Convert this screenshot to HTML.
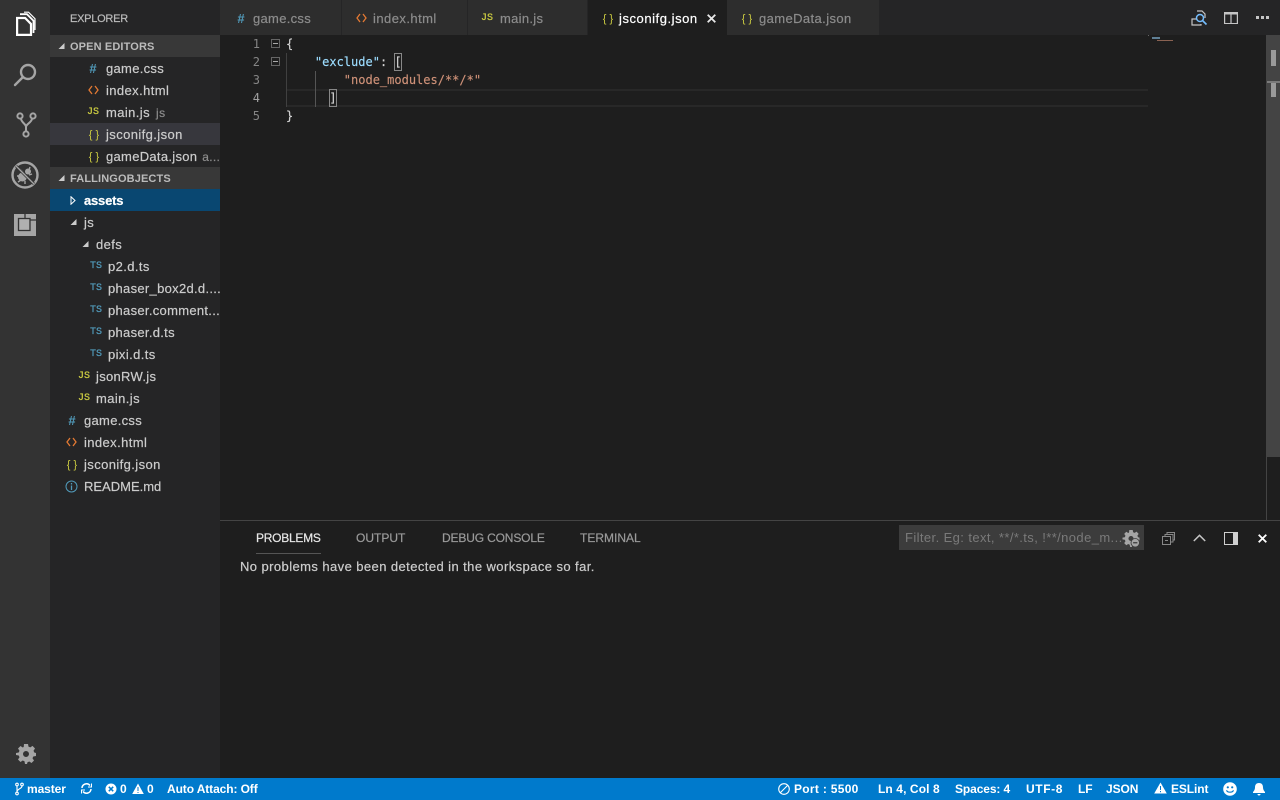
<!DOCTYPE html>
<html><head><meta charset="utf-8"><style>
html,body{margin:0;padding:0;width:1280px;height:800px;overflow:hidden;background:#1e1e1e}
body{font-family:"Liberation Sans",sans-serif;font-size:13px;color:#ccc;position:relative}
div,span.a,svg{position:absolute}
.t{white-space:nowrap;line-height:22px;height:22px;letter-spacing:.4px;margin-top:1px;-webkit-text-stroke:.2px}
.i{white-space:nowrap;line-height:22px;height:22px;text-align:center;margin-top:1px}
.hash{color:#519aba;font-size:13px;font-weight:bold}.js{color:#cbcb41;font-size:10px;font-family:"Liberation Mono",monospace;-webkit-text-stroke:.25px}.js2{color:#cbcb41;font-size:11px}.ts{color:#519aba;font-size:10px;font-family:"Liberation Mono",monospace;-webkit-text-stroke:.25px}
.m{font-family:"DejaVu Sans Mono",monospace;font-size:12px;line-height:18px;height:18px;white-space:pre;color:#d4d4d4;-webkit-text-stroke:.15px}
.n{color:#858585;width:20px;text-align:right;left:240px;-webkit-text-stroke:0}
.tab{top:0;height:35px;background:#2d2d2d;border-right:1px solid #252526;box-sizing:border-box}
.tt{top:7px;color:#8c8c8c;letter-spacing:.45px}
.h{font-size:11px;font-weight:bold;color:#bbb;line-height:22px;height:22px;white-space:nowrap;letter-spacing:.13px;margin-top:1px}
.p{top:527px;font-size:12px;line-height:22px;color:#9a9a9a;white-space:nowrap;-webkit-text-stroke:.2px}
.s{top:778px;height:22px;line-height:22px;color:#fff;font-size:12px;white-space:nowrap;font-weight:bold;letter-spacing:-.1px}
.c{fill:none;stroke:#e37933;stroke-width:1.300}
</style></head><body>

<div style="left:0;top:0;width:50px;height:778px;background:#333"></div>
<div style="left:50px;top:0;width:170px;height:778px;background:#252526"></div>

<svg style="left:14px;top:11px" width="24" height="26" viewBox="0 0 24 26" fill="none" stroke="#fff" stroke-width="2.200"><path d="M3.100 7h8l5.900 6v10.900H3.100z"/><path d="M6 3.200h7l6.500 6.500V22" stroke-width="1.800"/><path d="M10 1.200h4.500l6.500 6.500V19" stroke-width="1.200"/></svg>
<svg style="left:12px;top:62px" width="26" height="26" viewBox="0 0 26 26" fill="none" stroke="#a5a5a5" stroke-width="2.400"><circle cx="16" cy="10" r="7"/><path d="M11 15l-8 8" stroke-linecap="round"/></svg>
<svg style="left:14px;top:111px" width="24" height="28" viewBox="0 0 24 28" fill="none" stroke="#a5a5a5" stroke-width="2"><circle cx="6" cy="5" r="2.600"/><circle cx="19" cy="5" r="2.600"/><circle cx="12" cy="23" r="2.600"/><path d="M7 8c1 4 5 5 5 8v4M18 8c-1 4-6 5-6 8"/></svg>
<svg style="left:11px;top:161px" width="28" height="28" viewBox="0 0 28 28" fill="none" stroke="#a5a5a5"><circle cx="14" cy="14" r="12.500" stroke-width="2.400"/><ellipse cx="11.500" cy="16" rx="4.500" ry="4.500" fill="#a5a5a5" stroke="none"/><ellipse cx="17" cy="10.500" rx="3" ry="3" fill="#a5a5a5" stroke="none"/><path d="M9 8l3 3M21 13l-3 1M6 15h3M19 6l-1 3M7 21l3-2M14 23l0-3" stroke-width="1.400"/><path d="M5 5l18 18" stroke="#333" stroke-width="2.800"/><path d="M5 5l18 18" stroke-width="1.300"/></svg>
<svg style="left:14px;top:214px" width="22" height="22" viewBox="0 0 22 22"><rect width="22" height="22" fill="#a5a5a5"/><path d="M11 0v4M16 6h6M4.500 4.500h11.500v12H4.500z" fill="none" stroke="#333" stroke-width="1.300"/><rect x="5.500" y="5.500" width="9.500" height="10" fill="#b0b0b0"/></svg>
<svg style="left:16px;top:744px" width="20" height="20" viewBox="0 0 20 20"><path fill="#a5a5a5" fill-rule="evenodd" d="M8 0h4l.5 2.600 1.800.8L16.500 1.900 19 4.500l-1.500 2.200.8 1.800L20 9v3l-2.700.5-.8 1.800 1.500 2.200-2.500 2.500-2.200-1.500-1.800.8L11 20H9l-.5-2.700-1.800-.8-2.200 1.500L2 15.500l1.500-2.200-.8-1.800L0 11V9l2.700-.5.800-1.800L2 4.500 4.500 2l2.200 1.500 1-.5zM10 7a3 3 0 100 6 3 3 0 000-6z"/></svg>

<div class="t" style="left:70px;top:7px;font-size:11px;color:#bbb;letter-spacing:-.25px">EXPLORER</div>

<div style="left:50px;top:35px;width:170px;height:22px;background:#383838"></div>
<svg style="left:58px;top:42px" width="8" height="8"><path d="M6.500 1v6h-6z" fill="#ccc"/></svg>
<div class="h" style="left:70px;top:35px">OPEN EDITORS</div>

<div class="i hash" style="left:86px;top:57px;width:14px">#</div><div class="t" style="left:106px;top:57px;letter-spacing:.3px">game.css</div>
<svg style="left:88px;top:85px" width="11" height="10"><path class="c" d="M4 1L1 5l3 4M7 1l3 4-3 4"/></svg><div class="t" style="left:106px;top:79px">index.html</div>
<div class="i js" style="left:86px;top:101px;width:14px">JS</div><div class="t" style="left:106px;top:101px">main.js <span style="color:#8c8c8c;font-size:12px;margin-left:2px">js</span></div>
<div style="left:50px;top:123px;width:170px;height:22px;background:#37373d"></div>
<div class="i js2" style="left:86px;top:123px;width:16px">{ }</div><div class="t" style="left:106px;top:123px">jsconifg.json</div>
<div class="i js2" style="left:86px;top:145px;width:16px">{ }</div><div class="t" style="left:106px;top:145px;width:114px;overflow:hidden;letter-spacing:.3px">gameData.json <span style="color:#8c8c8c;font-size:12px;margin-left:1px">a...</span></div>

<div style="left:50px;top:167px;width:170px;height:22px;background:#383838"></div>
<svg style="left:58px;top:174px" width="8" height="8"><path d="M6.500 1v6h-6z" fill="#ccc"/></svg>
<div class="h" style="left:70px;top:167px">FALLINGOBJECTS</div>

<div style="left:50px;top:189px;width:170px;height:22px;background:#094771"></div>
<svg style="left:70px;top:196px" width="6" height="9"><path d="M1 .8l4 3.700-4 3.700z" fill="none" stroke="#fff"/></svg>
<div class="t" style="left:84px;top:189px;color:#fff;font-weight:bold;letter-spacing:-.2px">assets</div>

<svg style="left:70px;top:218px" width="8" height="8"><path d="M6.500 1v6h-6z" fill="#ccc"/></svg>
<div class="t" style="left:84px;top:211px">js</div>
<svg style="left:82px;top:240px" width="8" height="8"><path d="M6.500 1v6h-6z" fill="#ccc"/></svg>
<div class="t" style="left:96px;top:233px">defs</div>

<div class="i ts" style="left:89px;top:255px;width:14px">TS</div><div class="t" style="left:108px;top:255px">p2.d.ts</div>
<div class="i ts" style="left:89px;top:277px;width:14px">TS</div><div class="t" style="left:108px;top:277px;width:112px;overflow:hidden;letter-spacing:.3px">phaser_box2d.d....</div>
<div class="i ts" style="left:89px;top:299px;width:14px">TS</div><div class="t" style="left:108px;top:299px;width:113px;overflow:hidden;letter-spacing:.3px">phaser.comment...</div>
<div class="i ts" style="left:89px;top:321px;width:14px">TS</div><div class="t" style="left:108px;top:321px;letter-spacing:.3px">phaser.d.ts</div>
<div class="i ts" style="left:89px;top:343px;width:14px">TS</div><div class="t" style="left:108px;top:343px">pixi.d.ts</div>
<div class="i js" style="left:77px;top:365px;width:14px">JS</div><div class="t" style="left:96px;top:365px;letter-spacing:.3px">jsonRW.js</div>
<div class="i js" style="left:77px;top:387px;width:14px">JS</div><div class="t" style="left:96px;top:387px">main.js</div>
<div class="i hash" style="left:65px;top:409px;width:14px">#</div><div class="t" style="left:84px;top:409px;letter-spacing:.3px">game.css</div>
<svg style="left:66px;top:437px" width="11" height="10"><path class="c" d="M4 1L1 5l3 4M7 1l3 4-3 4"/></svg><div class="t" style="left:84px;top:431px">index.html</div>
<div class="i js2" style="left:64px;top:453px;width:16px">{ }</div><div class="t" style="left:84px;top:453px">jsconifg.json</div>
<svg style="left:65px;top:480px" width="13" height="13" fill="none" stroke="#519aba"><circle cx="6.500" cy="6.500" r="5.500"/><path d="M6.500 5.500v4.500M6.500 3v1.500" stroke-width="1.300"/></svg>
<div class="t" style="left:84px;top:475px;letter-spacing:0">README.md</div>

<!-- tabs -->
<div style="left:220px;top:0;width:1060px;height:35px;background:#252526"></div>
<div class="tab" style="left:220px;width:122px"></div>
<div class="tab" style="left:342px;width:126px"></div>
<div class="tab" style="left:468px;width:120px"></div>
<div style="left:588px;top:0;width:139px;height:35px;background:#1e1e1e"></div>
<div class="tab" style="left:727px;width:152px;border:0"></div>

<div class="i hash" style="left:234px;top:7px;width:14px">#</div><div class="t tt" style="left:253px;letter-spacing:.3px">game.css</div>
<svg style="left:356px;top:13px" width="11" height="10"><path class="c" d="M4 1L1 5l3 4M7 1l3 4-3 4"/></svg><div class="t tt" style="left:373px">index.html</div>
<div class="i js" style="left:480px;top:7px;width:14px">JS</div><div class="t tt" style="left:500px;letter-spacing:.3px">main.js</div>
<div class="i js2" style="left:600px;top:7px;width:16px">{ }</div><div class="t tt" style="left:619px;color:#fff;letter-spacing:.55px">jsconifg.json</div>
<svg style="left:707px;top:14px" width="9" height="9" stroke="#e8e8e8" stroke-width="1.800"><path d="M.7.700l7.600 7.600M8.300.700L.7 8.300"/></svg>
<div class="i js2" style="left:739px;top:7px;width:16px">{ }</div><div class="t tt" style="left:759px;letter-spacing:.4px">gameData.json</div>

<svg style="left:1191px;top:10px" width="18" height="16" viewBox="0 0 18 16" fill="none"><path d="M6 9H1v6h9v-1M6 1h5l3 3v4" stroke="#c5c5c5" stroke-width="1.200"/><circle cx="9" cy="8" r="3.500" stroke="#75beff" stroke-width="1.500"/><path d="M11.500 10.500l4 4" stroke="#75beff" stroke-width="1.600"/></svg>
<svg style="left:1224px;top:12px" width="14" height="12" fill="none" stroke="#c5c5c5" stroke-width="1.200"><path d="M.6.600h12.800v11H.6zM7 1v10"/><path d="M0 .500h14v2H0z" fill="#c5c5c5" stroke="none"/></svg>
<svg style="left:1256px;top:15px" width="13" height="5" fill="#c5c5c5"><rect x="0" y="1" width="3" height="3"/><rect x="5" y="1" width="3" height="3"/><rect x="10" y="1" width="3" height="3"/></svg>

<!-- editor -->
<div style="left:286px;top:89px;width:862px;height:18px;box-sizing:border-box;border-top:2px solid #282828;border-bottom:2px solid #282828"></div>
<div style="left:286px;top:53px;width:1px;height:54px;background:#404040"></div>
<div style="left:315px;top:71px;width:1px;height:36px;background:#555"></div>

<div class="m n" style="top:35px">1</div>
<div class="m n" style="top:53px">2</div>
<div class="m n" style="top:71px">3</div>
<div class="m n" style="top:89px;color:#a0a0a0">4</div>
<div class="m n" style="top:107px">5</div>

<svg style="left:271px;top:39px" width="9" height="9" fill="none" stroke="#aaa"><path d="M.5.500h8v8h-8z" stroke="#666"/><path d="M2 4.500h5"/></svg>
<svg style="left:271px;top:57px" width="9" height="9" fill="none" stroke="#aaa"><path d="M.5.500h8v8h-8z" stroke="#666"/><path d="M2 4.500h5"/></svg>

<div class="m" style="left:286px;top:35px">{</div>
<div class="m" style="left:286px;top:53px">    <span style="color:#9cdcfe">"exclude"</span>: <span>[</span></div>
<div class="m" style="left:286px;top:71px;color:#ce9178">        "node_modules/**/*"</div>
<div class="m" style="left:286px;top:89px">      ]</div>
<div class="m" style="left:286px;top:107px">}</div>
<div style="left:394px;top:53px;width:6px;height:16px;border:1px solid #888"></div>
<div style="left:329px;top:89px;width:6px;height:16px;border:1px solid #888"></div>

<!-- minimap -->
<div style="left:1148px;top:35px;width:1px;height:1px;background:#666"></div>
<div style="left:1152px;top:37px;width:8px;height:2px;background:#5f7f95"></div>
<div style="left:1157px;top:40px;width:16px;height:1px;background:#8a6252"></div>

<!-- scrollbar -->
<div style="left:1266px;top:35px;width:1px;height:485px;background:#444"></div>
<div style="left:1267px;top:35px;width:13px;height:422px;background:#444"></div>
<div style="left:1267px;top:81px;width:13px;height:2px;background:#7a7a7a"></div>
<div style="left:1271px;top:50px;width:5px;height:16px;background:#9a9a9a"></div>
<div style="left:1271px;top:83px;width:5px;height:14px;background:#9a9a9a"></div>

<!-- panel -->
<div style="left:220px;top:520px;width:1060px;height:1px;background:#444"></div>
<div class="p" style="left:256px;color:#e7e7e7;letter-spacing:-.25px">PROBLEMS</div>
<div style="left:256px;top:553px;width:65px;height:1px;background:#555"></div>
<div class="p" style="left:356px">OUTPUT</div>
<div class="p" style="left:442px;letter-spacing:-.15px">DEBUG CONSOLE</div>
<div class="p" style="left:580px">TERMINAL</div>
<div style="left:899px;top:525px;width:245px;height:25px;background:#3c3c3c"></div>
<div style="left:905px;top:527px;font-size:13px;line-height:22px;color:#7a7a7a;white-space:nowrap;letter-spacing:.4px;width:218px;overflow:hidden">Filter. Eg: text, **/*.ts, !**/node_m...</div>
<svg style="left:1122px;top:530px" width="18" height="17" viewBox="0 0 20 20"><path fill="#a5a5a5" fill-rule="evenodd" d="M8 0h4l.5 2.600 1.800.8L16.500 1.900 19 4.500l-1.500 2.200.8 1.800L20 9v3l-2.700.5-.8 1.800 1.500 2.200-2.500 2.500-2.200-1.500-1.800.8L11 20H9l-.5-2.700-1.800-.8-2.200 1.500L2 15.500l1.500-2.200-.8-1.800L0 11V9l2.700-.5.800-1.800L2 4.500 4.500 2l2.200 1.500 1-.5zM10 7a3 3 0 100 6 3 3 0 000-6z"/><circle cx="15" cy="15" r="5" fill="#a5a5a5" stroke="#3c3c3c"/><path d="M12.500 15h5" stroke="#3c3c3c" stroke-width="1.500"/></svg>
<svg style="left:1162px;top:532px" width="13" height="13" fill="none" stroke="#888"><path d="M.5 4.500h8v8h-8zM3 4V2.500h8V10H9M5 2V.5h7.500V8H11"/><path d="M3 8.500h3" /></svg>
<svg style="left:1193px;top:534px" width="13" height="8" fill="none" stroke="#c5c5c5" stroke-width="1.500"><path d="M.8 7l5.700-5.700L12.200 7"/></svg>
<svg style="left:1224px;top:532px" width="14" height="13"><path d="M.5.500h13v12H.5z" fill="none" stroke="#d0d0d0"/><path d="M9 1h4v11H9z" fill="#d0d0d0"/></svg>
<svg style="left:1258px;top:534px" width="9" height="9" stroke="#fff" stroke-width="1.800"><path d="M.7.700l7.600 7.600M8.300.700L.7 8.300"/></svg>
<div style="left:240px;top:556px;line-height:22px;white-space:nowrap;color:#ccc;letter-spacing:.42px;-webkit-text-stroke:.2px">No problems have been detected in the workspace so far.</div>

<!-- status -->
<div style="left:0;top:778px;width:1280px;height:22px;background:#007acc"></div>
<svg style="left:15px;top:782px" width="9" height="14" fill="none" stroke="#fff" stroke-width="1.100"><circle cx="2" cy="2.500" r="1.300"/><circle cx="7" cy="2.500" r="1.300"/><circle cx="2" cy="11.500" r="1.300"/><path d="M2 4v6M7 4c0 3-5 2.500-5 6"/></svg>
<div class="s" style="left:27px">master</div>
<svg style="left:81px;top:783px" width="11" height="11" fill="none" stroke="#fff" stroke-width="1.500"><path d="M1 5a4.500 4.500 0 018-2.500M10 6a4.500 4.500 0 01-8 2.500"/><path d="M10.500.5v3.500H7M.5 10.500V7H4" stroke-width="1"/></svg>
<svg style="left:105px;top:783px" width="12" height="12"><circle cx="6" cy="6" r="5.500" fill="#fff"/><path d="M3.800 3.800l4.400 4.400M8.200 3.800L3.800 8.200" stroke="#007acc" stroke-width="1.500"/></svg>
<div class="s" style="left:120px">0</div>
<svg style="left:132px;top:783px" width="12" height="12"><path d="M6 .5l5.800 10.500H.2z" fill="#fff"/><path d="M6 4v4M6 9v1" stroke="#007acc"/></svg>
<div class="s" style="left:147px">0</div>
<div class="s" style="left:167px">Auto Attach: Off</div>
<svg style="left:778px;top:783px" width="12" height="12" fill="none" stroke="#fff" stroke-width="1.100"><circle cx="6" cy="6" r="5.300"/><path d="M2.500 9.500l7-7"/></svg>
<div class="s" style="left:794px;letter-spacing:.3px">Port : 5500</div>
<div class="s" style="left:878px;letter-spacing:.1px">Ln 4, Col 8</div>
<div class="s" style="left:955px">Spaces: 4</div>
<div class="s" style="left:1026px;letter-spacing:.6px">UTF-8</div>
<div class="s" style="left:1078px">LF</div>
<div class="s" style="left:1106px">JSON</div>
<svg style="left:1154px;top:782px" width="13" height="12"><path d="M6.500.5l6.300 11H.2z" fill="#fff"/><path d="M6.500 4v4M6.500 9v1.300" stroke="#007acc"/></svg>
<div class="s" style="left:1171px">ESLint</div>
<svg style="left:1223px;top:782px" width="14" height="14"><circle cx="7" cy="7" r="6.800" fill="#fff"/><circle cx="4.800" cy="5.300" r="1.100" fill="#007acc"/><circle cx="9.200" cy="5.300" r="1.100" fill="#007acc"/><path d="M3.500 8.300c1 2.500 6 2.500 7 0" fill="none" stroke="#007acc" stroke-width="1.200"/></svg>
<svg style="left:1252px;top:782px" width="14" height="14" fill="#fff"><path d="M7 1c3 0 4 2 4 4.500 0 2 1 3.500 2 4.500v1H1v-1c1-1 2-2.500 2-4.500C3 3 4 1 7 1z"/><path d="M5.500 12h3a1.500 1.500 0 01-3 0z"/></svg>

</body></html>
